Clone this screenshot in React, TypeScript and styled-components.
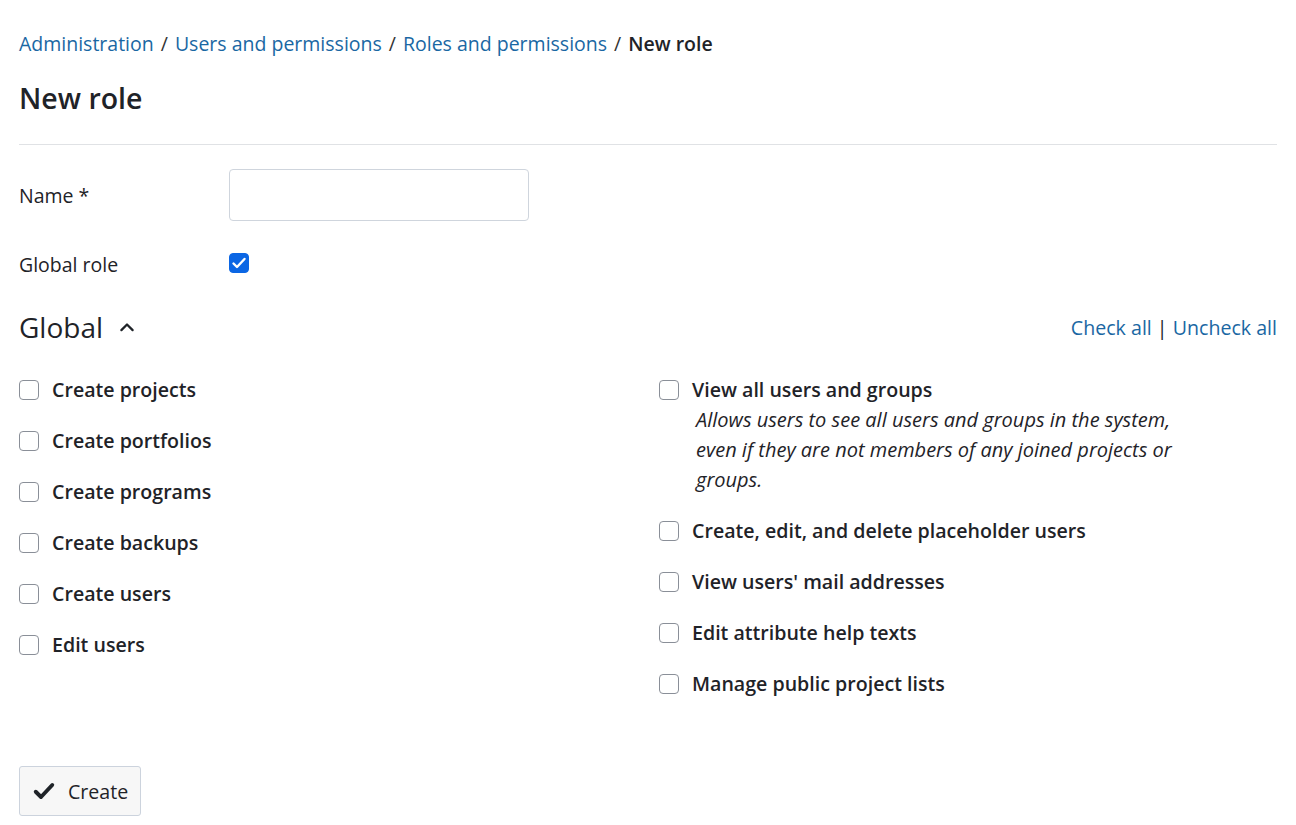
import styled, { createGlobalStyle } from "styled-components";

const GlobalStyle = createGlobalStyle`
  html, body {
    margin: 0;
    padding: 0;
    background: #fff;
  }
  body {
    font-family: "Open Sans", "Noto Sans", sans-serif;
    color: #1f2328;
  }
  * {
    box-sizing: border-box;
  }
`;

const Page = styled.div`
  padding: 28px 19px 8px 19px;
`;

const Breadcrumb = styled.nav`
  display: flex;
  align-items: center;
  gap: 7px;
  font-size: 19.5px;
  line-height: 32px;
`;

const Crumb = styled.a`
  color: #1a67a3;
  text-decoration: none;
`;

const Separator = styled.span`
  color: #333;
`;

const Current = styled.span`
  font-weight: 600;
`;

const Title = styled.h1`
  margin: 18px 0 0 0;
  font-size: 28.5px;
  font-weight: 600;
  line-height: 40px;
  padding-bottom: 26px;
  border-bottom: 1px solid #e0e2e5;
`;

const FormRow = styled.div<{ $top: number }>`
  display: grid;
  grid-template-columns: 210px 1fr;
  align-items: center;
  margin-top: ${(p) => p.$top}px;
`;

const Label = styled.label`
  font-size: 19.5px;
`;

const TextInput = styled.input`
  width: 300px;
  height: 52px;
  border: 1px solid #cfd5dd;
  border-radius: 4px;
  padding: 0 12px;
  font-size: 19px;
`;

const Box = styled.span<{ $checked?: boolean }>`
  display: inline-flex;
  align-items: center;
  justify-content: center;
  width: 20px;
  height: 20px;
  flex: none;
  border-radius: 4px;
  border: 1px solid ${(p) => (p.$checked ? "#0b66e4" : "#8a8f98")};
  background: ${(p) => (p.$checked ? "#0b66e4" : "#fff")};
`;

const SectionHeader = styled.div`
  display: flex;
  align-items: center;
  justify-content: space-between;
  margin-top: 29px;
`;

const SectionTitle = styled.h2`
  margin: 0;
  display: flex;
  align-items: center;
  gap: 14px;
  font-size: 28px;
  font-weight: 400;
  line-height: 40px;
`;

const Toggles = styled.div`
  font-size: 19.6px;
  color: #1f2328;
`;

const Columns = styled.div`
  display: grid;
  grid-template-columns: 1fr 1fr;
  column-gap: 22px;
  margin-top: 28px;
`;

const Column = styled.div`
  display: flex;
  flex-direction: column;
  gap: 21px;
`;

const Item = styled.div`
  display: flex;
  align-items: flex-start;
  gap: 13px;
`;

const ItemText = styled.div`
  display: flex;
  flex-direction: column;
`;

const ItemLabel = styled.span`
  font-size: 19.6px;
  font-weight: 600;
  line-height: 30px;
`;

const BoxWrap = styled.span`
  height: 30px;
  display: flex;
  align-items: center;
`;

const Description = styled.p`
  margin: 0 0 0 4px;
  font-size: 20px;
  font-style: italic;
  line-height: 30px;
  max-width: 492px;
`;

const Actions = styled.div`
  margin-top: 67px;
`;

const Button = styled.button`
  display: inline-flex;
  align-items: center;
  gap: 12px;
  height: 50px;
  padding: 0 12px;
  background: #f7f7f7;
  border: 1px solid #ccd3dd;
  border-radius: 3px;
  font-family: inherit;
  font-size: 19.6px;
  color: #1f2328;
`;

const CheckMark = ({ color, size, weight }: { color: string; size: number; weight: number }) => (
  <svg width={size} height={size} viewBox="0 0 16 16" fill="none">
    <path
      d="M2.5 8.5l3.5 3.5 7.5-8"
      stroke={color}
      strokeWidth={weight}
      strokeLinecap="round"
      strokeLinejoin="round"
    />
  </svg>
);

const Checkbox = ({ checked }: { checked?: boolean }) => (
  <Box $checked={checked}>{checked && <CheckMark color="#fff" size={16} weight={2.4} />}</Box>
);

type Permission = { label: string; description?: string };

const leftPermissions: Permission[] = [
  { label: "Create projects" },
  { label: "Create portfolios" },
  { label: "Create programs" },
  { label: "Create backups" },
  { label: "Create users" },
  { label: "Edit users" },
];

const rightPermissions: Permission[] = [
  {
    label: "View all users and groups",
    description:
      "Allows users to see all users and groups in the system, even if they are not members of any joined projects or groups.",
  },
  { label: "Create, edit, and delete placeholder users" },
  { label: "View users' mail addresses" },
  { label: "Edit attribute help texts" },
  { label: "Manage public project lists" },
];

const PermissionItem = ({ label, description }: Permission) => (
  <Item>
    <BoxWrap>
      <Checkbox />
    </BoxWrap>
    <ItemText>
      <ItemLabel>{label}</ItemLabel>
      {description && <Description>{description}</Description>}
    </ItemText>
  </Item>
);

export default function App() {
  return (
    <Page>
      <GlobalStyle />
      <Breadcrumb>
        <Crumb href="#">Administration</Crumb>
        <Separator>/</Separator>
        <Crumb href="#">Users and permissions</Crumb>
        <Separator>/</Separator>
        <Crumb href="#">Roles and permissions</Crumb>
        <Separator>/</Separator>
        <Current>New role</Current>
      </Breadcrumb>
      <Title>New role</Title>

      <FormRow $top={24}>
        <Label>Name *</Label>
        <TextInput type="text" />
      </FormRow>
      <FormRow $top={30}>
        <Label>Global role</Label>
        <span>
          <Checkbox checked />
        </span>
      </FormRow>

      <SectionHeader>
        <SectionTitle>
          Global
          <svg width="20" height="20" viewBox="0 0 16 16" fill="none">
            <path
              d="M3.5 10.5L8 6l4.5 4.5"
              stroke="#1f2328"
              strokeWidth={1.8}
              strokeLinecap="round"
              strokeLinejoin="round"
            />
          </svg>
        </SectionTitle>
        <Toggles>
          <Crumb href="#">Check all</Crumb> | <Crumb href="#">Uncheck all</Crumb>
        </Toggles>
      </SectionHeader>

      <Columns>
        <Column>
          {leftPermissions.map((p) => (
            <PermissionItem key={p.label} {...p} />
          ))}
        </Column>
        <Column>
          {rightPermissions.map((p) => (
            <PermissionItem key={p.label} {...p} />
          ))}
        </Column>
      </Columns>

      <Actions>
        <Button>
          <CheckMark color="#1f2328" size={24} weight={2.6} />
          Create
        </Button>
      </Actions>
    </Page>
  );
}
